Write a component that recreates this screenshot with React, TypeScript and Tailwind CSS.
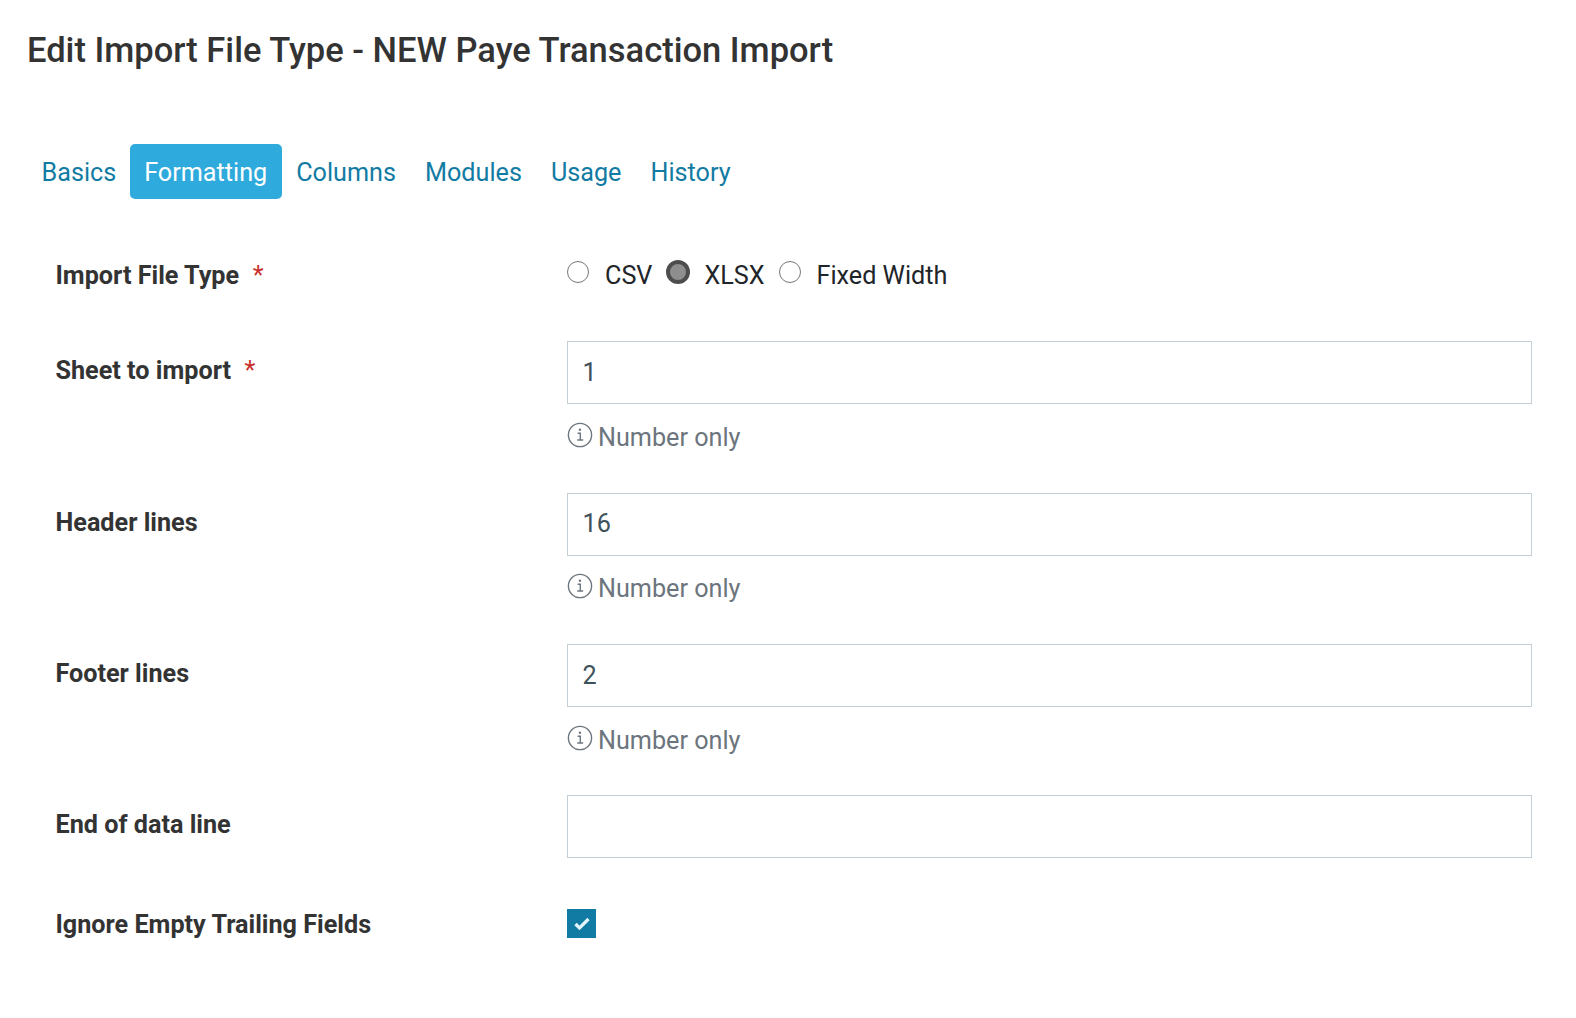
import React from "react";

function Hint() {
  return (
    <div className="flex items-center h-[30px] mt-[18.6px] text-[25.2px] leading-[30px] text-[#6c757d]">
      <svg width="26" height="26" viewBox="0 0 26 26" fill="none" className="mr-[5px] -mt-[6px] shrink-0">
        <circle cx="13" cy="13" r="11.6" stroke="#6c757d" strokeWidth="1.4" />
        <path d="M10.6 11.2h2.7v6.6M10.2 18h6" stroke="#6c757d" strokeWidth="1.4" />
        <circle cx="12.9" cy="7.8" r="1.2" fill="#6c757d" />
      </svg>
      Number only
    </div>
  );
}

function Req() {
  return <span className="text-[#c9302c] font-normal ml-[13.5px]">*</span>;
}

function Field({ label, req, value, hint, cls }: { label: string; req?: boolean; value: string; hint?: boolean; cls: string }) {
  return (
    <div className={`flex ${cls}`}>
      <div className="w-[511.5px] shrink-0 text-[25.2px] leading-[30px] font-bold text-[#333] pt-[15px]">
        {label}
        {req && <Req />}
      </div>
      <div className="flex-1">
        <div className="h-[63px] border border-[#c2cfd6] flex items-center px-[14.5px] text-[25.2px] text-[#3e515b]">{value}</div>
        {hint && <Hint />}
      </div>
    </div>
  );
}

function Radio({ checked, label, cls, gap }: { checked?: boolean; label: string; cls: string; gap: string }) {
  return (
    <div className={`flex items-center ${cls}`}>
      {checked ? (
        <span className="w-[24px] h-[24px] rounded-full border-[4px] border-[#4d4d4d] bg-[#8e8e8e] -mt-[8px]" />
      ) : (
        <span className="w-[22px] h-[22px] rounded-full border border-[#767676] bg-white -mt-[8px]" />
      )}
      <span className={`${gap} text-[25.2px] leading-[30px] text-[#212529]`}>{label}</span>
    </div>
  );
}

export default function App() {
  const tabs = ["Columns", "Modules", "Usage", "History"];
  return (
    <div className="w-[1576px] h-[1018px] bg-white overflow-hidden" style={{ fontFamily: "Roboto, sans-serif" }}>
      <h1 className="pl-[27px] pt-[30px] text-[34.5px] leading-[40px] font-medium text-[#333]">
        Edit Import File Type - NEW Paye Transaction Import
      </h1>
      <div className="flex items-center mt-[74px] pl-[27px] text-[25.2px] text-[#127ba3]">
        <span className="pl-[14.5px] pr-[13.5px] pt-[2px]">Basics</span>
        <span className="h-[55px] flex items-center pt-[2px] px-[14.5px] rounded-[5px] bg-[#2eaadc] text-white">Formatting</span>
        <div className="flex pt-[2px]">
          {tabs.map((t) => (
            <span key={t} className="px-[14.5px]">{t}</span>
          ))}
        </div>
      </div>
      <div className="pl-[55.5px] pr-[44px]">
        <div className="flex mt-[61px] h-[32px] items-center">
          <div className="w-[511.5px] shrink-0 text-[25.2px] leading-[30px] font-bold text-[#333]">
            Import File Type
            <Req />
          </div>
          <div className="flex">
            <Radio label="CSV" cls="mr-[14px]" gap="ml-[16px]" />
            <Radio checked label="XLSX" cls="mr-[14px]" gap="ml-[14px]" />
            <Radio label="Fixed Width" cls="" gap="ml-[16px]" />
          </div>
        </div>
        <Field label="Sheet to import" req value="1" hint cls="mt-[49px]" />
        <Field label="Header lines" value="16" hint cls="mt-[40px]" />
        <Field label="Footer lines" value="2" hint cls="mt-[40px]" />
        <Field label="End of data line" value="" cls="mt-[39px]" />
        <div className="flex items-center mt-[51px] h-[30px]">
          <div className="w-[511.5px] shrink-0 text-[25.2px] leading-[30px] font-bold text-[#333] pt-[2px]">Ignore Empty Trailing Fields</div>
          <span className="w-[29px] h-[29px] bg-[#127ba3] flex items-center justify-center">
            <svg width="16" height="13" viewBox="0 0 16 13" fill="none">
              <path d="M1.5 7l4 4 9-9" stroke="#e3f3fa" strokeWidth="3.2" />
            </svg>
          </span>
        </div>
      </div>
    </div>
  );
}
